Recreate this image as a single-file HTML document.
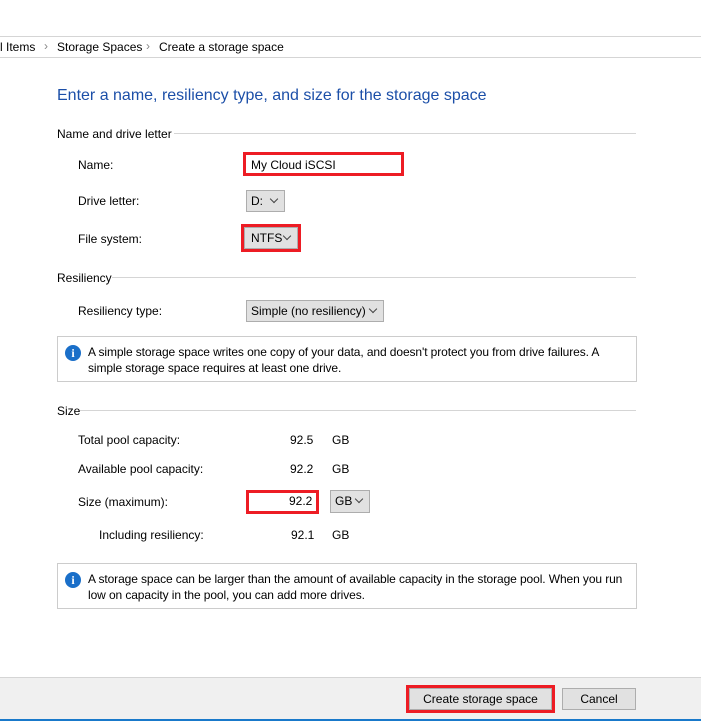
<!DOCTYPE html>
<html><head><style>
body{margin:0;width:701px;height:721px;background:#fff;font-family:"Liberation Sans",sans-serif;font-size:12px;color:#000;position:relative;overflow:hidden}
.a{position:absolute;white-space:nowrap}
.hl{position:absolute;height:1px;background:#d5d5d5}
.dd,.btn{position:absolute;background:#e1e1e1;border:1px solid #adadad;box-sizing:border-box;padding:3px 0 0 4px;white-space:nowrap}
.dd:after{content:"";position:absolute;right:7px;top:5px;width:5px;height:5px;border-right:1px solid #444;border-bottom:1px solid #444;transform:rotate(45deg)}
.red{position:absolute;border:3px solid #ed1c24;box-sizing:border-box}
.info{position:absolute;border:1px solid #ccc;box-sizing:border-box;padding:7px 0 0 30px;line-height:16px;letter-spacing:-0.1px}
.ic{position:absolute;left:7px;top:8px;width:16px;height:16px;border-radius:50%;background:#1a6fc9;color:#fff;font-weight:bold;font-size:12px;text-align:center;line-height:16px;font-family:"Liberation Serif",serif}
</style></head><body>
<div class="hl" style="left:0;top:36px;width:701px"></div>
<div class="hl" style="left:0;top:57px;width:701px"></div>
<div class="a" style="left:0;top:40px">l Items</div>
<div class="a" style="left:44px;top:39px;color:#888">›</div>
<div class="a" style="left:57px;top:40px">Storage Spaces</div>
<div class="a" style="left:146px;top:39px;color:#888">›</div>
<div class="a" style="left:159px;top:40px">Create a storage space</div>
<div class="a" style="left:57px;top:87px;font-size:16px;color:#1c4fa8">Enter a name, resiliency type, and size for the storage space</div>

<div class="a" style="left:57px;top:127px">Name and drive letter</div>
<div class="hl" style="left:174px;top:133px;width:462px"></div>
<div class="a" style="left:78px;top:158px">Name:</div>
<div class="red" style="left:243px;top:152px;width:161px;height:24px"></div>
<div class="a" style="left:251px;top:158px">My Cloud iSCSI</div>
<div class="a" style="left:78px;top:194px">Drive letter:</div>
<div class="dd" style="left:246px;top:190px;width:39px;height:22px">D:</div>
<div class="a" style="left:78px;top:232px">File system:</div>
<div class="dd" style="left:244px;top:227px;width:54px;height:22px;padding-left:6px">NTFS</div>
<div class="red" style="left:241px;top:224px;width:60px;height:28px"></div>

<div class="a" style="left:57px;top:271px">Resiliency</div>
<div class="hl" style="left:112px;top:277px;width:524px"></div>
<div class="a" style="left:78px;top:304px">Resiliency type:</div>
<div class="dd" style="left:246px;top:300px;width:138px;height:22px">Simple (no resiliency)</div>
<div class="info" style="left:57px;top:336px;width:580px;height:46px"><div class="ic">i</div>A simple storage space writes one copy of your data, and doesn't protect you from drive failures. A<br>simple storage space requires at least one drive.</div>

<div class="a" style="left:57px;top:404px">Size</div>
<div class="hl" style="left:80px;top:410px;width:556px"></div>
<div class="a" style="left:78px;top:433px">Total pool capacity:</div>
<div class="a" style="left:290px;top:433px">92.5</div><div class="a" style="left:332px;top:433px">GB</div>
<div class="a" style="left:78px;top:462px">Available pool capacity:</div>
<div class="a" style="left:290px;top:462px">92.2</div><div class="a" style="left:332px;top:462px">GB</div>
<div class="a" style="left:78px;top:495px">Size (maximum):</div>
<div class="red" style="left:246px;top:490px;width:73px;height:24px"></div>
<div class="a" style="left:289px;top:494px">92.2</div>
<div class="dd" style="left:330px;top:490px;width:40px;height:23px">GB</div>
<div class="a" style="left:99px;top:528px">Including resiliency:</div>
<div class="a" style="left:291px;top:528px">92.1</div><div class="a" style="left:332px;top:528px">GB</div>
<div class="info" style="left:57px;top:563px;width:580px;height:46px"><div class="ic">i</div>A storage space can be larger than the amount of available capacity in the storage pool. When you run<br>low on capacity in the pool, you can add more drives.</div>

<div style="position:absolute;left:0;top:677px;width:701px;height:42px;background:#f0f0f0;border-top:1px solid #d5d5d5"></div>
<div style="position:absolute;left:0;top:719px;width:701px;height:2px;background:#1979ca"></div>
<div class="btn" style="left:409px;top:688px;width:143px;height:22px;text-align:center;padding:3px 0 0">Create storage space</div>
<div class="red" style="left:406px;top:685px;width:149px;height:28px"></div>
<div class="btn" style="left:562px;top:688px;width:74px;height:22px;text-align:center;padding:3px 0 0">Cancel</div>
</body></html>
